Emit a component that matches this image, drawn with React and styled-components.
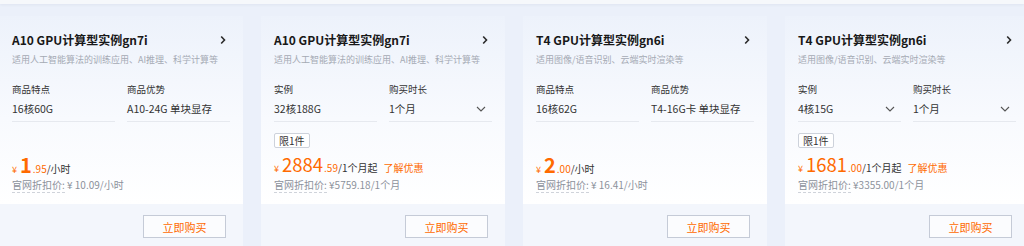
import React from 'react';
import styled, { createGlobalStyle } from 'styled-components';

const GlobalStyle = createGlobalStyle`
    html, body {
        margin: 0;
        padding: 0;
    }
    body {
        background-color: #ebf0fa;
        font-family: "Noto Sans CJK SC", "Noto Sans", sans-serif;
        color: #333;
    }
`;

const Page = styled.div`
    height: 246px;
    overflow: hidden;
    display: flex;
    flex-direction: column;
`;

const TopBar = styled.div`
    height: 4px;
    background-color: #f6f8fb;
    box-shadow: 0 1px 3px rgba(30, 50, 90, 0.06);
`;

const Track = styled.div`
    flex: 1;
    display: flex;
    gap: 18px;
    margin-left: -1px;
    padding-top: 12px;
`;

const Card = styled.div`
    flex: 0 0 244px;
    min-width: 0;
    display: flex;
    flex-direction: column;
`;

const Body = styled.div`
    height: 188px;
    box-sizing: border-box;
    padding: 14px 13px 12px;
    display: flex;
    flex-direction: column;
    background: linear-gradient(180deg, #edf2fb 0%, #f8fafe 55%, #ffffff 100%);
`;

const Header = styled.div`
    display: flex;
    align-items: center;
    justify-content: space-between;
    padding-right: 4px;
`;

const Title = styled.div`
    font-size: 12px;
    line-height: 20px;
    font-weight: 700;
    color: #181818;
`;

const Desc = styled.div`
    margin-top: 3px;
    font-size: 9px;
    line-height: 14px;
    white-space: nowrap;
    overflow: hidden;
    color: #a5aab4;
`;

const Specs = styled.div`
    margin-top: 15px;
    display: grid;
    grid-template-columns: 1fr 1fr;
    column-gap: 12px;
`;

const Spec = styled.div`
    display: flex;
    flex-direction: column;
`;

const Label = styled.div`
    font-size: 9.5px;
    line-height: 14px;
    color: #333;
`;

const Value = styled.div`
    margin-top: 5px;
    padding: 0 6px 4px 0;
    border-bottom: 1px solid #e6e9ef;
    display: flex;
    align-items: center;
    justify-content: space-between;
    font-size: 10.5px;
    line-height: 16px;
    color: #333;
`;

const Bottom = styled.div`
    margin-top: auto;
    display: flex;
    flex-direction: column;
    align-items: flex-start;
`;

const Tag = styled.span`
    height: 15px;
    box-sizing: border-box;
    padding: 0 4px;
    margin-bottom: 3px;
    border: 1px solid #cdd2db;
    border-radius: 2px;
    background-color: #fff;
    font-size: 10px;
    line-height: 13px;
    color: #333;
`;

const PriceRow = styled.div`
    height: 27px;
    display: flex;
    align-items: baseline;
    line-height: 27px;
`;

const Yen = styled.span`
    font-size: 9px;
    color: #ff6a00;
    margin-right: 3px;
`;

const Amount = styled.span`
    font-size: ${(p) => (p.$bold ? '20px' : '18.5px')};
    line-height: 27px;
    color: #ff6a00;
    font-weight: ${(p) => (p.$bold ? 700 : 400)};
`;

const Decimal = styled.span`
    font-size: 10px;
    color: #ff6a00;
    margin-left: 1px;
`;

const Unit = styled.span`
    font-size: 10px;
    color: #333;
`;

const Link = styled.span`
    margin-left: 6px;
    font-size: 10px;
    color: #ff6a00;
`;

const Original = styled.div`
    font-size: 10px;
    line-height: 14px;
    color: #8c919b;
`;

const Dotted = styled.span`
    border-bottom: 1px dashed #cfd3da;
`;

const Footer = styled.div`
    flex: 1;
    display: flex;
    justify-content: flex-end;
    padding: 11px 17px 0 0;
    background-color: #f3f6fc;
`;

const BuyButton = styled.button`
    width: 83px;
    height: 23px;
    padding: 0;
    border: 1px solid #c5cbd7;
    background-color: #fbfcfe;
    color: #ff6a00;
    font-family: inherit;
    font-size: 11px;
    cursor: pointer;
`;

const ChevronRight = () => (
    <svg width="6" height="10" viewBox="0 0 6 10">
        <path d="M1.2 1.5 4.5 5 1.2 8.5" fill="none" stroke="#2a2a2a" strokeWidth="1.6" />
    </svg>
);

const ChevronDown = () => (
    <svg width="10" height="6" viewBox="0 0 10 6">
        <path d="M1 1l4 4 4-4" fill="none" stroke="#555" strokeWidth="1.1" />
    </svg>
);

const cards = [
    {
        title: 'A10 GPU计算型实例gn7i',
        desc: '适用人工智能算法的训练应用、AI推理、科学计算等',
        specs: [
            { label: '商品特点', value: '16核60G' },
            { label: '商品优势', value: 'A10-24G 单块显存' },
        ],
        price: { int: '1', dec: '.95', unit: '/小时' },
        orig: '¥ 10.09/小时',
    },
    {
        title: 'A10 GPU计算型实例gn7i',
        desc: '适用人工智能算法的训练应用、AI推理、科学计算等',
        specs: [
            { label: '实例', value: '32核188G' },
            { label: '购买时长', value: '1个月', select: true },
        ],
        tag: '限1件',
        price: { int: '2884', dec: '.59', unit: '/1个月起', link: '了解优惠' },
        orig: '¥5759.18/1个月',
    },
    {
        title: 'T4 GPU计算型实例gn6i',
        desc: '适用图像/语音识别、云端实时渲染等',
        specs: [
            { label: '商品特点', value: '16核62G' },
            { label: '商品优势', value: 'T4-16G卡 单块显存' },
        ],
        price: { int: '2', dec: '.00', unit: '/小时' },
        orig: '¥ 16.41/小时',
    },
    {
        title: 'T4 GPU计算型实例gn6i',
        desc: '适用图像/语音识别、云端实时渲染等',
        specs: [
            { label: '实例', value: '4核15G', select: true },
            { label: '购买时长', value: '1个月', select: true },
        ],
        tag: '限1件',
        price: { int: '1681', dec: '.00', unit: '/1个月起', link: '了解优惠' },
        orig: '¥3355.00/1个月',
    },
];

const ProductCard = ({ card }) => (
    <Card>
        <Body>
            <Header>
                <Title>{card.title}</Title>
                <ChevronRight />
            </Header>
            <Desc>{card.desc}</Desc>
            <Specs>
                {card.specs.map((spec) => (
                    <Spec key={spec.label}>
                        <Label>{spec.label}</Label>
                        <Value>
                            <span>{spec.value}</span>
                            {spec.select && <ChevronDown />}
                        </Value>
                    </Spec>
                ))}
            </Specs>
            <Bottom>
                {card.tag && <Tag>{card.tag}</Tag>}
                <PriceRow>
                    <Yen>¥</Yen>
                    <Amount $bold={card.price.int.length === 1}>{card.price.int}</Amount>
                    <Decimal>{card.price.dec}</Decimal>
                    <Unit>{card.price.unit}</Unit>
                    {card.price.link && <Link>{card.price.link}</Link>}
                </PriceRow>
                <Original>
                    <Dotted>官网折扣价:</Dotted> {card.orig}
                </Original>
            </Bottom>
        </Body>
        <Footer>
            <BuyButton>立即购买</BuyButton>
        </Footer>
    </Card>
);

const App = () => (
    <Page>
        <GlobalStyle />
        <TopBar />
        <Track>
            {cards.map((card, i) => (
                <ProductCard key={i} card={card} />
            ))}
        </Track>
    </Page>
);

export default App;
